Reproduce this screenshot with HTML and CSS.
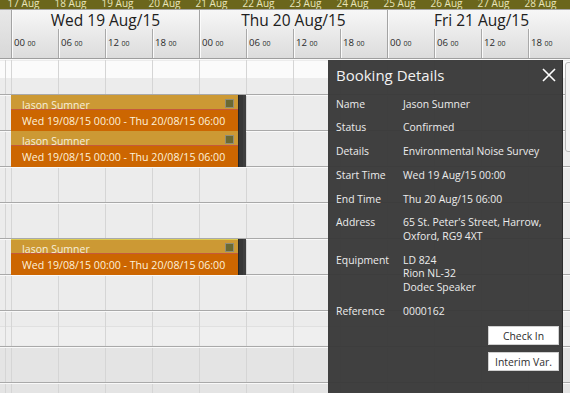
FILE: index.html
```html
<!DOCTYPE html>
<html lang="en">
<head>
<meta charset="utf-8">
<title>Booking schedule</title>
<link rel="stylesheet" href="styles.css">
</head>
<body>
<div class="app">
  <div class="datebar">
    <span>17 Aug</span><span>18 Aug</span><span>19 Aug</span><span>20 Aug</span><span>21 Aug</span><span>22 Aug</span>
    <span>23 Aug</span><span>24 Aug</span><span>25 Aug</span><span>26 Aug</span><span>27 Aug</span><span>28 Aug</span>
  </div>
  <div class="header">
    <div class="lead"></div>
    <div class="day">
      <div class="day-title">Wed 19 Aug/15</div>
      <div class="hours">
        <div class="hour">00 <small>00</small></div>
        <div class="hour">06 <small>00</small></div>
        <div class="hour">12 <small>00</small></div>
        <div class="hour">18 <small>00</small></div>
      </div>
    </div>
    <div class="day">
      <div class="day-title">Thu 20 Aug/15</div>
      <div class="hours">
        <div class="hour">00 <small>00</small></div>
        <div class="hour">06 <small>00</small></div>
        <div class="hour">12 <small>00</small></div>
        <div class="hour">18 <small>00</small></div>
      </div>
    </div>
    <div class="day">
      <div class="day-title">Fri 21 Aug/15</div>
      <div class="hours">
        <div class="hour">00 <small>00</small></div>
        <div class="hour">06 <small>00</small></div>
        <div class="hour">12 <small>00</small></div>
        <div class="hour">18 <small>00</small></div>
      </div>
    </div>
  </div>
  <div class="grid">
    <div class="row row-top"></div>
    <div class="row">
      <div class="booking">
        <div class="booking-main">
          <div class="booking-head"><span class="booking-name">Jason Sumner</span><span class="booking-flag"></span></div>
          <div class="booking-time">Wed 19/08/15 00:00 - Thu 20/08/15 06:00</div>
        </div>
        <div class="booking-end"></div>
      </div>
    </div>
    <div class="row">
      <div class="booking">
        <div class="booking-main">
          <div class="booking-head"><span class="booking-name">Jason Sumner</span><span class="booking-flag"></span></div>
          <div class="booking-time">Wed 19/08/15 00:00 - Thu 20/08/15 06:00</div>
        </div>
        <div class="booking-end"></div>
      </div>
    </div>
    <div class="row"></div>
    <div class="row"></div>
    <div class="row">
      <div class="booking booking-lit">
        <div class="booking-main">
          <div class="booking-head"><span class="booking-name">Jason Sumner</span><span class="booking-flag"></span></div>
          <div class="booking-time">Wed 19/08/15 00:00 - Thu 20/08/15 06:00</div>
        </div>
        <div class="booking-end"></div>
      </div>
    </div>
    <div class="row"></div>
    <div class="row row-boxed"></div>
    <div class="row row-dim"></div>
    <div class="row row-dim"></div>
  </div>

  <aside class="panel">
    <div class="panel-head">
      <h1 class="panel-title">Booking Details</h1>
      <svg class="close" width="14" height="14" viewBox="0 0 14 14" aria-label="Close">
        <path d="M1 1 L13 13 M13 1 L1 13" stroke="#ffffff" stroke-width="1.6" fill="none"/>
      </svg>
    </div>
    <dl class="details">
      <dt>Name</dt><dd>Jason Sumner</dd>
      <dt>Status</dt><dd>Confirmed</dd>
      <dt>Details</dt><dd>Environmental Noise Survey</dd>
      <dt>Start Time</dt><dd>Wed 19 Aug/15 00:00</dd>
      <dt>End Time</dt><dd>Thu 20 Aug/15 06:00</dd>
      <dt>Address</dt><dd>65 St. Peter's Street, Harrow,<br>Oxford, RG9 4XT</dd>
      <dt>Equipment</dt><dd>LD 824<br>Rion NL-32<br>Dodec Speaker</dd>
      <dt>Reference</dt><dd>0000162</dd>
    </dl>
    <div class="actions">
      <button class="btn">Check In</button>
      <button class="btn">Interim Var.</button>
    </div>
  </aside>
  <div class="scroll-thumb"></div>
</div>
</body>
</html>
```

FILE: styles.css
```css
* { box-sizing: border-box; margin: 0; padding: 0; }

html, body {
  width: 570px;
  height: 393px;
  overflow: hidden;
}

body {
  font-family: "Open Sans", "Noto Sans", sans-serif;
  background: #ebebeb;
}

.app {
  position: relative;
  width: 570px;
  height: 393px;
  overflow: hidden;
}

/* top strip of dates */
.datebar {
  height: 9px;
  background: #6b661c;
  display: flex;
  overflow: hidden;
}
.datebar span {
  flex: 0 0 47px;
  text-align: center;
  font-size: 10px;
  line-height: 9px;
  margin-top: -1.5px;
  color: #e9e5bb;
  white-space: nowrap;
}

/* day / hour header */
.header {
  display: flex;
  height: 50px;
  border-top: 1px solid #a6a6a6;
  border-bottom: 1px solid #9e9e9e;
  background: linear-gradient(#f7f7f7, #dcdcdc);
  overflow: hidden;
}
.lead {
  flex: 0 0 11px;
  background: linear-gradient(#e8e8e8, #d8d8d8);
}
.day {
  flex: 0 0 188px;
  display: flex;
  flex-direction: column;
  border-left: 1px solid #a3a3a3;
  box-shadow: inset 1px 0 0 #fbfbfb;
}
.day-title {
  height: 19px;
  line-height: 21px;
  font-size: 15.5px;
  text-align: center;
  color: #202020;
  white-space: nowrap;
}
.hours {
  flex: 1;
  display: grid;
  grid-template-columns: 46px 47px 47px 47px;
}
.hour {
  padding: 7px 0 0 2px;
  font-size: 9.6px;
  line-height: 14px;
  color: #2a2a2a;
  white-space: nowrap;
}
.hour + .hour {
  border-left: 1px solid #a9a9a9;
  box-shadow: inset 1px 0 0 #fbfbfb;
}
.hour small {
  font-size: 7px;
}

/* schedule grid */
.grid {
  display: flex;
  flex-direction: column;
}
.row {
  height: 36px;
  flex: none;
  background-color: #ececec;
  background-image:
    linear-gradient(to bottom, #f9f9f9 0 1px, transparent 1px calc(100% - 1px), #a9a9a9 calc(100% - 1px)),
    repeating-linear-gradient(to right, #d5d5d5 0 1px, transparent 1px 47px);
  background-position: 0 0, 11px 0;
}
.row-top {
  background-image:
    linear-gradient(to bottom, #f9f9f9 0 1px, transparent 1px calc(100% - 1px), #a9a9a9 calc(100% - 1px)),
    repeating-linear-gradient(to right, #d5d5d5 0 1px, transparent 1px 47px),
    linear-gradient(to bottom, transparent 0 2px, #fbfbfb 2px 19px, transparent 19px);
  background-position: 0 0, 11px 0, 0 0;
}
.row-boxed {
  background-image:
    linear-gradient(to bottom, #f9f9f9 0 1px, transparent 1px calc(100% - 1px), #a9a9a9 calc(100% - 1px)),
    repeating-linear-gradient(to right, #d5d5d5 0 1px, transparent 1px 47px),
    linear-gradient(to bottom, transparent 0 15px, #e0e0e0 15px 16px, #efefef 16px 34px, transparent 34px);
  background-position: 0 0, 11px 0, 0 0;
}
.row-dim {
  background-color: #e4e4e4;
}

/* bookings */
.booking {
  margin-left: 11px;
  width: 235px;
  height: 36px;
  display: flex;
}
.booking-main {
  flex: 1;
  display: flex;
  flex-direction: column;
}
.booking-head {
  height: 14px;
  flex: none;
  background: #cc9934;
  display: flex;
  justify-content: space-between;
  align-items: flex-start;
  padding: 3px 0 0 11px;
}
.booking-lit .booking-head {
  border-top: 1px solid #dccb52;
  padding-top: 2px;
}
.booking-name {
  font-size: 10.5px;
  line-height: 14px;
  color: #f7eedb;
  white-space: nowrap;
}
.booking-flag {
  width: 9px;
  height: 9px;
  margin: 1px 4px 0 0;
  background: #6a6932;
  border: 1px solid #8f8d7a;
}
.booking-time {
  flex: 1;
  background: #cc6601;
  border-top: 1px solid #c5593b;
  padding: 4px 0 0 11px;
  font-size: 10.6px;
  line-height: 14px;
  color: #fdf2dc;
  white-space: nowrap;
}
.booking-end {
  flex: 0 0 8px;
  background: #363636;
  border-left: 1px solid #262626;
  box-shadow: inset -3px 0 0 #3e3e3e;
}

/* details overlay */
.panel {
  position: absolute;
  left: 328px;
  top: 60px;
  width: 235px;
  bottom: 0;
  background: rgba(58, 58, 58, 0.97);
  border-right: 1px solid #2c2c2c;
  color: #ececec;
  padding: 5px 6px 0 8px;
}
.panel-head {
  display: flex;
  justify-content: space-between;
  align-items: flex-start;
  height: 20px;
}
.panel-title {
  font-size: 15px;
  line-height: 20px;
  font-weight: normal;
  color: #f2f2f2;
}
.close {
  margin-top: 3px;
  flex: none;
}
.details {
  margin-top: 12.5px;
  display: grid;
  grid-template-columns: 67px 1fr;
  row-gap: 10.3px;
  font-size: 10.4px;
  line-height: 13.5px;
}
.details dt, .details dd {
  white-space: nowrap;
}
.actions {
  margin-top: 8px;
  margin-right: -3px;
  display: flex;
  flex-direction: column;
  align-items: flex-end;
  gap: 7px;
}
.btn {
  width: 71px;
  height: 19px;
  background: #ffffff;
  border: 1px solid #d0d0d0;
  color: #2e2e2e;
  font-family: inherit;
  font-size: 10.4px;
  line-height: 16px;
}

.scroll-thumb {
  position: absolute;
  left: 565px;
  top: 62px;
  width: 9px;
  height: 90px;
  background: #f5f5f5;
  border: 1px solid #b9b9b9;
  border-radius: 3px;
}
```
